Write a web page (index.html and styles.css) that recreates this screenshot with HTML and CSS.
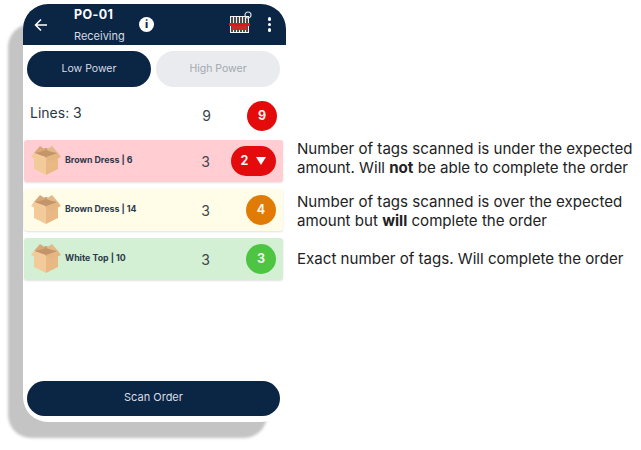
FILE: index.html

```html
<!DOCTYPE html>
<html lang="en">
<head>
    <meta charset="UTF-8">
    <title>Receiving</title>
    <link rel="stylesheet" href="styles.css">
</head>
<body>
    <svg class="svg-defs" width="0" height="0">
        <symbol id="box" viewBox="0 0 30 30">
            <path d="M15 11 L3 7 L3 23 L15 29 Z" fill="#f3cb9b"/>
            <path d="M15 11 L27 7 L27 23 L15 29 Z" fill="#e9b985"/>
            <path d="M3 7 L15 2 L27 7 L15 12 Z" fill="#c4946a"/>
            <path d="M3 7 L0 11 L11 16 L15 11 Z" fill="#f3cb9b"/>
            <path d="M27 7 L30 11 L19 16 L15 11 Z" fill="#e6b680"/>
            <path d="M3 7 L9 0 L15 4 L9 6 Z" fill="#d9a877"/>
            <path d="M27 7 L21 0 L15 4 L21 6 Z" fill="#e5b888"/>
        </symbol>
    </svg>

    <div class="phone">
        <div class="header">
            <svg class="back" width="14" height="14" viewBox="0 0 14 14">
                <path d="M13 7 H2 M7 1.5 L1.5 7 L7 12.5" fill="none" stroke="#fff" stroke-width="1.5"/>
            </svg>
            <div class="title">
                <div class="po">PO-01</div>
                <div class="sub">Receiving</div>
            </div>
            <div class="info">i</div>
            <svg class="barcode" width="24" height="24" viewBox="0 0 24 24">
                <rect x="1" y="5" width="19" height="17" fill="#f4f4f4"/>
                <path d="M3 6 V21 M6 6 V21 M9 6 V21 M12 6 V21 M15 6 V21 M18 6 V21" stroke="#222" stroke-width="1.6"/>
                <rect x="0" y="12" width="21" height="3" fill="#d8181c"/>
                <rect x="3" y="15" width="15" height="4" fill="#c92a2a"/>
                <circle cx="19" cy="4" r="3" fill="none" stroke="#ddd" stroke-width="1.2"/>
            </svg>
            <div class="dots"><span></span><span></span><span></span></div>
        </div>

        <div class="toggle">
            <div class="pill pill-on">Low Power</div>
            <div class="pill pill-off">High Power</div>
        </div>

        <div class="summary">
            <div class="lines">Lines: 3</div>
            <div class="count">9</div>
            <div class="badge red">9</div>
        </div>

        <div class="row row-red">
            <svg class="box-icon"><use href="#box"/></svg>
            <div class="name">Brown Dress | 6</div>
            <div class="count">3</div>
            <div class="badge red wide">2 <i class="arrow"></i></div>
        </div>
        <div class="row row-yellow">
            <svg class="box-icon"><use href="#box"/></svg>
            <div class="name">Brown Dress | 14</div>
            <div class="count">3</div>
            <div class="badge orange">4</div>
        </div>
        <div class="row row-green">
            <svg class="box-icon"><use href="#box"/></svg>
            <div class="name">White Top | 10</div>
            <div class="count">3</div>
            <div class="badge green">3</div>
        </div>

        <div class="scan">Scan Order</div>
    </div>

    <div class="notes">
        <p class="note">Number of tags scanned is under the expected<br>amount. Will <b>not</b> be able to complete the order</p>
        <p class="note">Number of tags scanned is over the expected<br>amount but <b>will</b> complete the order</p>
        <p class="note">Exact number of tags. Will complete the order</p>
    </div>
</body>
</html>
```

FILE: styles.css

```css
* {
    box-sizing: border-box;
    margin: 0;
    padding: 0;
}
body {
    display: flex;
    height: 450px;
    padding: 4px 0 0 23px;
    background-color: #fff;
    font-family: Inter, sans-serif;
    overflow: hidden;
}
.svg-defs {
    display: none;
}
.phone {
    display: flex;
    flex-direction: column;
    width: 263px;
    height: 418px;
    flex-shrink: 0;
    padding-bottom: 6px;
    background-color: #fff;
    border-radius: 25px;
    box-shadow: -17px 18px 3px -2px #c4c4c4;
}
.header {
    display: flex;
    align-items: center;
    height: 41px;
    padding: 0 15px 0 11px;
    background-color: #0b2545;
    border-radius: 25px 25px 0 0;
    color: #fff;
}
.title {
    width: 102px;
    margin-left: 26px;
}
.po {
    font-size: 12.5px;
    font-weight: 700;
    line-height: 17px;
    letter-spacing: 0.4px;
}
.sub {
    font-size: 11px;
    line-height: 14px;
    margin-top: 6px;
    color: #d5dae1;
}
.info {
    width: 15px;
    height: 15px;
    margin-left: -37px;
    background-color: #fff;
    border-radius: 50%;
    color: #0b2545;
    font-size: 11px;
    font-weight: 800;
    line-height: 15px;
    text-align: center;
}
.barcode {
    margin-left: auto;
    margin-top: -3px;
}
.dots {
    display: flex;
    flex-direction: column;
    gap: 2px;
    margin-left: 15px;
}
.dots span {
    width: 3.5px;
    height: 3.5px;
    background-color: #fff;
    border-radius: 50%;
}
.toggle {
    display: flex;
    gap: 5px;
    padding: 6px 6px 0 4px;
}
.pill {
    flex: 1;
    height: 36px;
    border-radius: 18px;
    font-size: 10.5px;
    line-height: 36px;
    text-align: center;
}
.pill-on {
    background-color: #0b2545;
    color: #d9dee5;
}
.pill-off {
    background-color: #e9ebee;
    color: #a3a8ae;
}
.summary {
    display: flex;
    align-items: center;
    height: 53px;
    padding: 4px 9px 0 7px;
}
.lines {
    width: 160px;
    margin-top: -7px;
    font-size: 14px;
    color: #2c3644;
}
.count {
    width: 33px;
    font-size: 14px;
    color: #3b4450;
    text-align: center;
}
.badge {
    width: 30px;
    height: 30px;
    margin-left: auto;
    border-radius: 15px;
    color: #f3f3f3;
    font-size: 12.5px;
    font-weight: 700;
    line-height: 30px;
    text-align: center;
}
.wide {
    display: flex;
    align-items: center;
    justify-content: center;
    gap: 8px;
    width: 45px;
}
.arrow {
    width: 0;
    height: 0;
    border-left: 5px solid transparent;
    border-right: 5px solid transparent;
    border-top: 8px solid #fff;
}
.red {
    background-color: #e30b0b;
}
.orange {
    background-color: #e07b06;
}
.green {
    background-color: #4ec443;
}
.row {
    display: flex;
    align-items: center;
    width: 259px;
    height: 42px;
    margin: 0 0 7px 1px;
    padding: 0 7px;
    border-radius: 3px;
    box-shadow: 0 1px 2px rgba(0, 0, 0, 0.12);
}
.row-red {
    background-color: #ffcdd2;
}
.row-yellow {
    background-color: #fffde8;
}
.row-green {
    background-color: #d3efd4;
}
.box-icon {
    width: 30px;
    height: 30px;
    flex-shrink: 0;
}
.name {
    width: 124px;
    margin-left: 4px;
    margin-top: -4px;
    font-size: 8.8px;
    font-weight: 700;
    color: #2c3a4c;
}
.scan {
    width: 253px;
    height: 35px;
    margin: auto 0 0 4px;
    background-color: #0b2545;
    border-radius: 18px;
    color: #d9dee5;
    font-size: 11px;
    line-height: 33px;
    text-align: center;
}
.notes {
    padding: 135px 0 0 11px;
    white-space: nowrap;
}
.note {
    height: 53px;
    font-size: 15.1px;
    line-height: 19px;
    color: #222;
}
.note:last-child {
    padding-top: 4px;
}
.note b {
    font-weight: 700;
}
```
